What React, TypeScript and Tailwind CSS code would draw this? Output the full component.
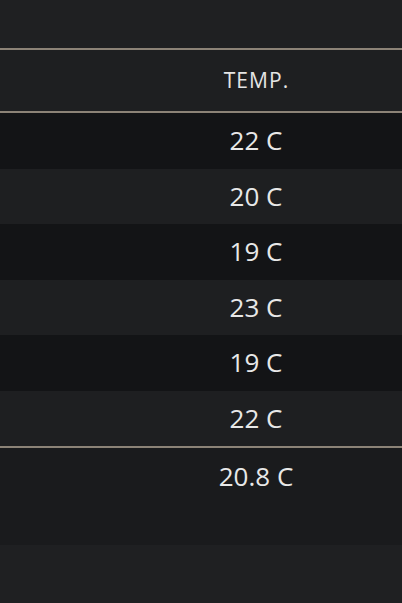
const temps = ['22 C', '20 C', '19 C', '23 C', '19 C', '22 C'];

export default function App() {
  return (
    <div className="h-[603px] w-[402px] overflow-hidden bg-[#1f2022] font-['Open_Sans',sans-serif] text-[#e8e8e8]">
      <div className="h-[48px]" />
      <div className="h-[2px] bg-[#8c8377]" />
      <div className="grid h-[61px] grid-cols-[110px_1fr] items-center bg-[#1e1f21]">
        <div />
        <div className="pl-[1px] text-center text-[21px] font-medium tracking-[0.05em] text-[#e4e4e4]">TEMP.</div>
      </div>
      <div className="h-[2px] bg-[#8c8377]" />
      {temps.map((t, i) => (
        <div
          key={i}
          className={`grid h-[55.5px] grid-cols-[110px_1fr] items-center ${i % 2 === 0 ? 'bg-[#131416]' : 'bg-[#1e1f21]'}`}
        >
          <div />
          <div className="text-center text-[26px]">{t}</div>
        </div>
      ))}
      <div className="h-[2px] bg-[#8c8377]" />
      <div className="grid h-[97px] grid-cols-[110px_1fr] bg-[#1a1b1d]">
        <div />
        <div className="flex h-[56px] items-center justify-center text-[26px]">20.8 C</div>
      </div>
    </div>
  );
}
